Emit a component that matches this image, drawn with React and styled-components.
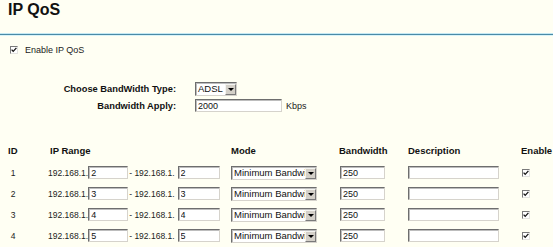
import React from 'react';
import styled, { createGlobalStyle } from 'styled-components';

const Global = createGlobalStyle`
  html, body { margin: 0; padding: 0; background: #fffff3; }
  body { font-family: "Liberation Sans", Arial, sans-serif; color: #222; }
`;

const Page = styled.div`
  width: 553px;
  height: 247px;
  overflow: hidden;
  background: #fffff3;
`;

const Title = styled.h1`
  margin: 0;
  padding: 1px 0 14px 8px;
  font-size: 16px;
  line-height: 18px;
  font-weight: bold;
  color: #111;
`;

const Rule = styled.div`
  height: 1px;
  background: #4b8ba6;
  border-top: 1px solid #c4e9f3;
  border-bottom: 1px solid #d9f3f8;
`;

const EnableRow = styled.label`
  display: flex;
  align-items: center;
  gap: 7px;
  height: 10px;
  margin: 9px 0 0 10px;
  font-size: 9px;
`;

const Settings = styled.div`
  display: grid;
  grid-template-columns: 176px auto;
  column-gap: 19px;
  row-gap: 3px;
  margin-top: 27px;
  align-items: center;
`;

const Label = styled.div`
  text-align: right;
  font-size: 9.3px;
  font-weight: bold;
  color: #111;
  white-space: nowrap;
`;

const Control = styled.div`
  display: flex;
  align-items: center;
  gap: 4px;
  font-size: 9px;
`;

const TextBox = styled.input`
  box-sizing: border-box;
  width: ${p => p.$w}px;
  height: 13px;
  margin: 0;
  padding: 0 2px;
  font-family: "Liberation Sans", Arial, sans-serif;
  font-size: 9px;
  color: #111;
  background: #fff;
  border: 1px solid;
  border-color: #6e6e6e #d6d3cc #d6d3cc #6e6e6e;
  box-shadow: inset 1px 1px 0 #bdbdbd;
  outline: none;
`;

const SelectBox = styled.div`
  box-sizing: border-box;
  display: flex;
  align-items: stretch;
  width: ${p => p.$w}px;
  height: 14px;
  background: #fff;
  border: 1px solid;
  border-color: #6e6e6e #d6d3cc #d6d3cc #6e6e6e;
  box-shadow: inset 1px 1px 0 #bdbdbd;
`;

const SelectText = styled.span`
  flex: 1;
  overflow: hidden;
  white-space: nowrap;
  padding-left: 2px;
  font-size: 9.5px;
  line-height: 12px;
  color: #111;
`;

const ArrowBtn = styled.span`
  box-sizing: border-box;
  width: 11px;
  margin: 1px 0 0 0;
  display: flex;
  align-items: center;
  justify-content: center;
  background: #d4d0c8;
  border: 1px solid;
  border-color: #f4f4f0 #7a7a7a #7a7a7a #f4f4f0;
  &::after {
    content: "";
    border-left: 3px solid transparent;
    border-right: 3px solid transparent;
    border-top: 3px solid #000;
  }
`;

const Select = ({ w, children }) => (
  <SelectBox $w={w}>
    <SelectText>{children}</SelectText>
    <ArrowBtn />
  </SelectBox>
);

const CheckFrame = styled.span`
  box-sizing: border-box;
  display: inline-flex;
  align-items: center;
  justify-content: center;
  width: 8px;
  height: 8px;
  background: #fff;
  border: 1px solid;
  border-color: #7a7a7a #e4e4e0 #e4e4e0 #7a7a7a;
`;

const Check = () => (
  <CheckFrame>
    <svg width="6" height="6" viewBox="0 0 6 6">
      <path d="M0.6 2.6 L2.2 4.4 L5.4 0.9" stroke="#111" strokeWidth="1.3" fill="none" />
    </svg>
  </CheckFrame>
);

const Table = styled.div`
  display: grid;
  grid-template-columns: 48px 183px 108px 69px 113px 1fr;
  grid-auto-rows: 21px;
  grid-template-rows: 19px;
  margin-top: 31px;
  align-items: center;
`;

const Head = styled.div`
  font-size: 9.5px;
  font-weight: bold;
  color: #111;
  white-space: nowrap;
  padding-left: ${p => p.$pl || 0}px;
  align-self: start;
  line-height: 16px;
`;

const IdCell = styled.div`
  width: 10px;
  margin-left: 8px;
  text-align: center;
  font-size: 8.5px;
`;

const RangeCell = styled.div`
  display: flex;
  align-items: center;
  font-size: 8.5px;
  white-space: nowrap;
`;

const Dash = styled.span`
  margin: 0 3px 0 1px;
`;

const Cell = styled.div`
  display: flex;
  align-items: center;
  padding-left: ${p => p.$pl || 0}px;
`;

const rows = [
  { id: 1, ip: '2' },
  { id: 2, ip: '3' },
  { id: 3, ip: '4' },
  { id: 4, ip: '5' },
];

export default function App() {
  return (
    <Page>
      <Global />
      <Title>IP QoS</Title>
      <Rule />
      <EnableRow>
        <Check />
        <span>Enable IP QoS</span>
      </EnableRow>
      <Settings>
        <Label>Choose BandWidth Type:</Label>
        <Control>
          <Select w={42}>ADSL</Select>
        </Control>
        <Label>Bandwidth Apply:</Label>
        <Control>
          <TextBox $w={87} defaultValue="2000" readOnly />
          <span>Kbps</span>
        </Control>
      </Settings>
      <Table>
        <Head $pl={8}>ID</Head>
        <Head $pl={2}>IP Range</Head>
        <Head>Mode</Head>
        <Head>Bandwidth</Head>
        <Head>Description</Head>
        <Head>Enable</Head>
        {rows.map(r => (
          <React.Fragment key={r.id}>
            <IdCell>{r.id}</IdCell>
            <RangeCell>
              <span>192.168.1.</span>
              <TextBox $w={40} defaultValue={r.ip} readOnly />
              <Dash>- 192.168.1.</Dash>
              <TextBox $w={42} defaultValue={r.ip} readOnly />
            </RangeCell>
            <Cell>
              <Select w={86}>Minimum Bandwidth</Select>
            </Cell>
            <Cell $pl={1}>
              <TextBox $w={45} defaultValue="250" readOnly />
            </Cell>
            <Cell>
              <TextBox $w={91} defaultValue="" readOnly />
            </Cell>
            <Cell $pl={1}>
              <Check />
            </Cell>
          </React.Fragment>
        ))}
      </Table>
    </Page>
  );
}
